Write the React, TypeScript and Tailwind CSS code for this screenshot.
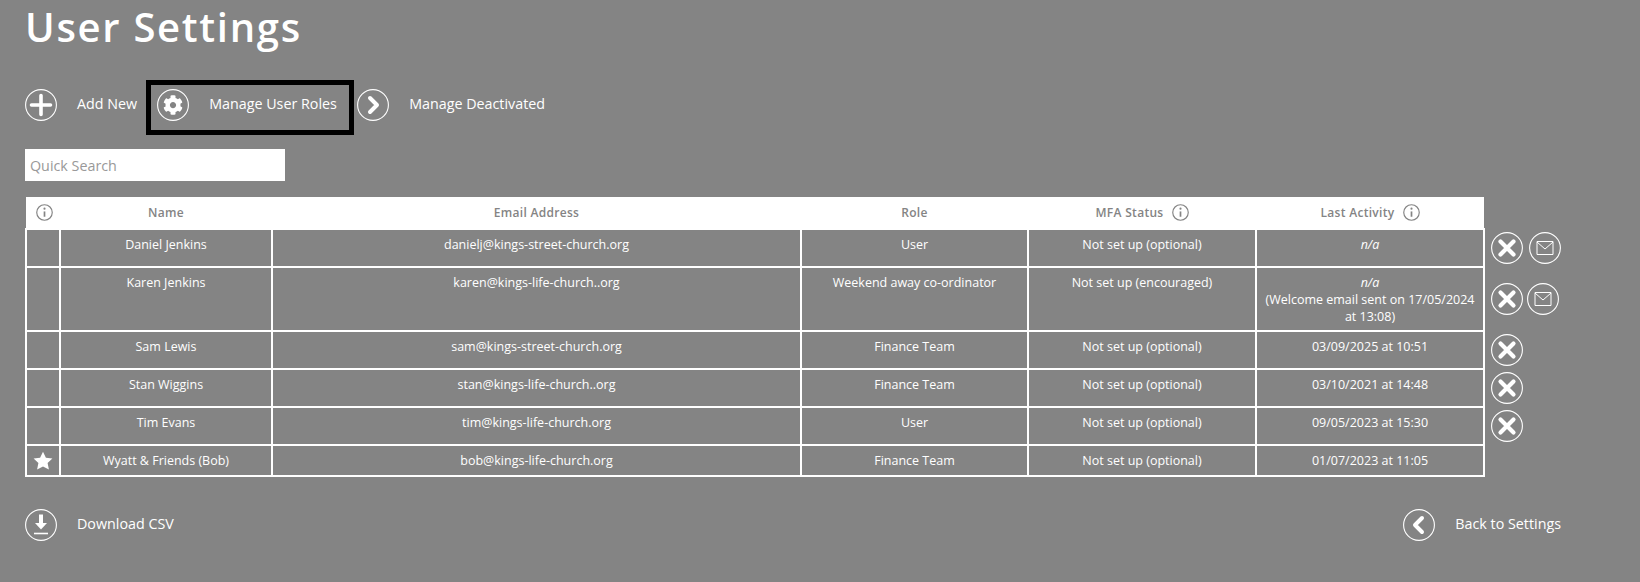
import type { ReactNode } from "react";
import { FaCog } from "react-icons/fa";

type User = {
  name: string;
  email: string;
  role: string;
  mfa: string;
  activity: ReactNode;
  star?: boolean;
  canRemove?: boolean;
  canMail?: boolean;
  tight?: boolean;
};

const USERS: User[] = [
  { name: "Daniel Jenkins", email: "danielj@kings-street-church.org", role: "User", mfa: "Not set up (optional)", activity: <em>n/a</em>, canRemove: true, canMail: true },
  {
    name: "Karen Jenkins",
    email: "karen@kings-life-church..org",
    role: "Weekend away co-ordinator",
    mfa: "Not set up (encouraged)",
    activity: (
      <>
        <em>n/a</em>
        <br />
        (Welcome email sent on 17/05/2024 at 13:08)
      </>
    ),
    canRemove: true,
    canMail: true,
    tight: true,
  },
  { name: "Sam Lewis", email: "sam@kings-street-church.org", role: "Finance Team", mfa: "Not set up (optional)", activity: "03/09/2025 at 10:51", canRemove: true },
  { name: "Stan Wiggins", email: "stan@kings-life-church..org", role: "Finance Team", mfa: "Not set up (optional)", activity: "03/10/2021 at 14:48", canRemove: true },
  { name: "Tim Evans", email: "tim@kings-life-church.org", role: "User", mfa: "Not set up (optional)", activity: "09/05/2023 at 15:30", canRemove: true },
  { name: "Wyatt & Friends (Bob)", email: "bob@kings-life-church.org", role: "Finance Team", mfa: "Not set up (optional)", activity: "01/07/2023 at 11:05", star: true },
];

// round outlined icon used by every action on the page
function CircleIcon({ children }: { children: ReactNode }) {
  return (
    <svg className="w-8 h-8 shrink-0 block" viewBox="0 0 32 32" fill="none" stroke="white">
      <circle cx="16" cy="16" r="15.4" strokeWidth="1.1" />
      {children}
    </svg>
  );
}

const PlusIcon = () => (
  <CircleIcon>
    <path d="M16 6.5v19M6.5 16h19" strokeWidth="3.6" strokeLinecap="round" />
  </CircleIcon>
);

const GearIcon = () => (
  <CircleIcon>
    <FaCog x={6} y={6} size={20} color="white" stroke="none" />
  </CircleIcon>
);

const NextIcon = () => (
  <CircleIcon>
    <path d="M13 9l7 7-7 7" strokeWidth="4" strokeLinecap="round" strokeLinejoin="round" />
  </CircleIcon>
);

const BackIcon = () => (
  <CircleIcon>
    <path d="M19 9l-7 7 7 7" strokeWidth="4" strokeLinecap="round" strokeLinejoin="round" />
  </CircleIcon>
);

const CrossIcon = () => (
  <CircleIcon>
    <path d="M9.5 9.5l13 13M22.5 9.5l-13 13" strokeWidth="4.2" strokeLinecap="round" />
  </CircleIcon>
);

const MailIcon = () => (
  <CircleIcon>
    <path d="M8 9.5h16v13H8zM8 10l8 7 8-7" strokeWidth="1" />
  </CircleIcon>
);

const DownloadIcon = () => (
  <CircleIcon>
    <path d="M16 5.5v10" strokeWidth="4" />
    <path d="M10 14h12l-6 6.5z" fill="white" stroke="none" />
    <path d="M9 24.5h14" strokeWidth="1.6" />
  </CircleIcon>
);

function InfoIcon() {
  return (
    <svg className="w-[17px] h-[17px] block shrink-0" viewBox="0 0 16 16" fill="none" stroke="#848484">
      <circle cx="8" cy="8" r="7.3" strokeWidth="1.1" />
      <path d="M8 7v5" strokeWidth="1.6" />
      <circle cx="8" cy="4.4" r="1" fill="#848484" stroke="none" />
    </svg>
  );
}

function ActionLink({ icon, label }: { icon: ReactNode; label: string }) {
  return (
    <a className="flex items-center gap-5 text-[14.3px] text-white cursor-pointer">
      {icon}
      <span className="pb-[3px]">{label}</span>
    </a>
  );
}

const CELL = "border-2 border-white align-top px-1 pt-[6px] pb-[6px] text-center";

export default function App() {
  return (
    <div
      className="h-[582px] overflow-hidden bg-[#848484] pl-[25px] text-white"
      style={{ fontFamily: '"Open Sans", sans-serif' }}
    >
      <div className="w-[1536px]">
        <h1 className="text-[40px] leading-[54px] font-semibold tracking-[1.7px]">User Settings</h1>

        {/* 상단 액션 */}
        <div className="flex items-center h-[55px] mt-[26px] pb-[5px]">
          <ActionLink icon={<PlusIcon />} label="Add New" />
          <div className="ml-[9px] mr-[3px] h-[55px] -mb-[5px] w-[208px] border-[5px] border-black pl-[6px] pb-[5px] flex items-center">
            <ActionLink icon={<GearIcon />} label="Manage User Roles" />
          </div>
          <ActionLink icon={<NextIcon />} label="Manage Deactivated" />
        </div>

        <input
          placeholder="Quick Search"
          className="block mt-[14px] w-[260px] h-[32px] bg-white px-[5px] text-[14.3px] text-black placeholder:text-[#999] outline-none"
        />

        <table className="mt-[16px] border-collapse table-fixed w-[1536px] text-[12.5px] leading-[17px]">
          <colgroup>
            <col className="w-[34px]" />
            <col className="w-[212px]" />
            <col className="w-[529px]" />
            <col className="w-[227px]" />
            <col className="w-[228px]" />
            <col className="w-[228px]" />
            <col />
          </colgroup>
          <thead>
            <tr className="h-[32px] text-[#848484] text-[12px] font-semibold tracking-[0.3px]">
              <th className="bg-white">
                <div className="flex justify-center ml-[2px]">
                  <InfoIcon />
                </div>
              </th>
              <th className="bg-white font-semibold">Name</th>
              <th className="bg-white font-semibold">Email Address</th>
              <th className="bg-white font-semibold">Role</th>
              <th className="bg-white font-semibold">
                <div className="flex items-center justify-center gap-2">
                  MFA Status <InfoIcon />
                </div>
              </th>
              <th className="bg-white font-semibold">
                <div className="flex items-center justify-center gap-2">
                  Last Activity <InfoIcon />
                </div>
              </th>
              <th />
            </tr>
          </thead>
          <tbody>
            {USERS.map((u) => (
              <tr key={u.email}>
                <td className={`${CELL} !p-0 !align-middle`}>
                  {u.star && (
                    <svg className="w-5 h-5 mx-auto block" viewBox="0 0 20 20" fill="white">
                      <path d="M10 .8l2.9 6 6.5.8-4.8 4.5 1.3 6.5-5.9-3.2-5.9 3.2 1.3-6.5L.6 7.6l6.5-.8z" />
                    </svg>
                  )}
                </td>
                <td className={CELL}>{u.name}</td>
                <td className={CELL}>{u.email}</td>
                <td className={CELL}>{u.role}</td>
                <td className={CELL}>{u.mfa}</td>
                <td className="border-2 border-white align-top px-1 pt-[6px] pb-[5px] text-center">{u.activity}</td>
                <td className="pl-[6px] py-[3px] align-middle">
                  <div className={`flex items-center ${u.tight ? "gap-[4px]" : "gap-[6px]"}`}>
                    {u.canRemove && <CrossIcon />}
                    {u.canMail && <MailIcon />}
                  </div>
                </td>
              </tr>
            ))}
          </tbody>
        </table>

        <div className="flex items-center justify-between mt-[32px]">
          <ActionLink icon={<DownloadIcon />} label="Download CSV" />
          <ActionLink icon={<BackIcon />} label="Back to Settings" />
        </div>
      </div>
    </div>
  );
}
